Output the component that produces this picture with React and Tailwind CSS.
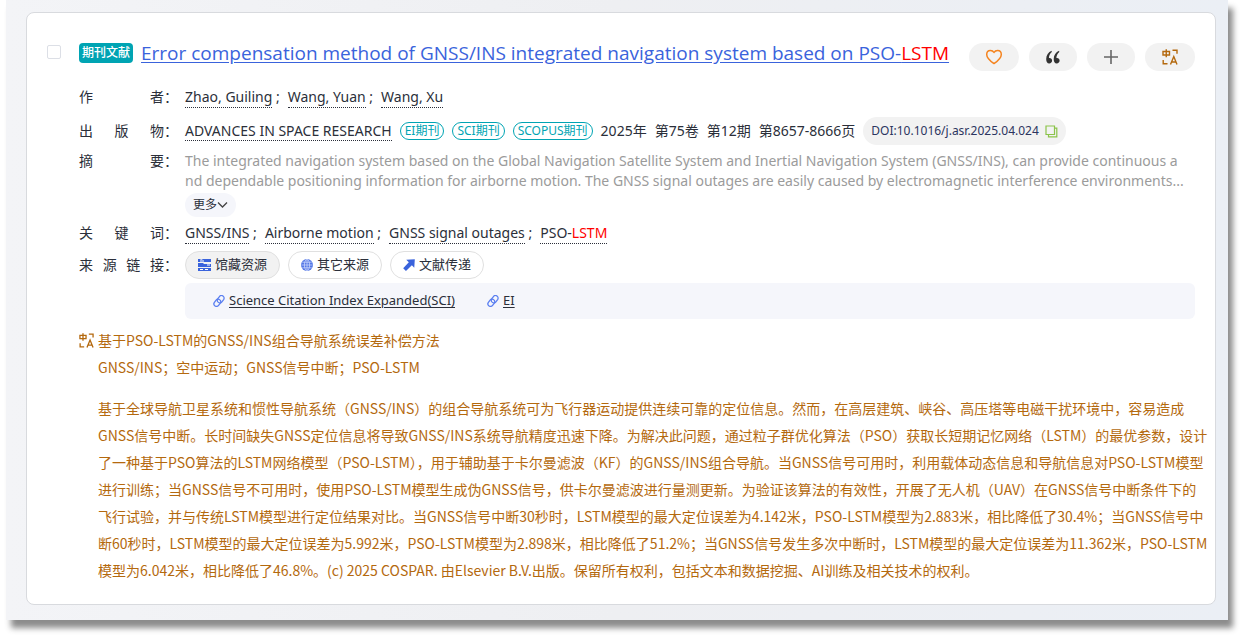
import React, { useState } from 'react';

const authors = ['Zhao, Guiling', 'Wang, Yuan', 'Wang, Xu'];
const indexes = ['EI期刊', 'SCI期刊', 'SCOPUS期刊'];
const issue = ['2025年', '第75卷', '第12期', '第8657-8666页'];
const keywords = ['GNSS/INS', 'Airborne motion', 'GNSS signal outages', 'PSO-LSTM'];

const abstractLines = [
  'The integrated navigation system based on the Global Navigation Satellite System and Inertial Navigation System (GNSS/INS), can provide continuous a',
  'nd dependable positioning information for airborne motion. The GNSS signal outages are easily caused by electromagnetic interference environments...',
];

const translation =
  '基于全球导航卫星系统和惯性导航系统（GNSS/INS）的组合导航系统可为飞行器运动提供连续可靠的定位信息。然而，在高层建筑、峡谷、高压塔等电磁干扰环境中，容易造成GNSS信号中断。长时间缺失GNSS定位信息将导致GNSS/INS系统导航精度迅速下降。为解决此问题，通过粒子群优化算法（PSO）获取长短期记忆网络（LSTM）的最优参数，设计了一种基于PSO算法的LSTM网络模型（PSO-LSTM），用于辅助基于卡尔曼滤波（KF）的GNSS/INS组合导航。当GNSS信号可用时，利用载体动态信息和导航信息对PSO-LSTM模型进行训练；当GNSS信号不可用时，使用PSO-LSTM模型生成伪GNSS信号，供卡尔曼滤波进行量测更新。为验证该算法的有效性，开展了无人机（UAV）在GNSS信号中断条件下的飞行试验，并与传统LSTM模型进行定位结果对比。当GNSS信号中断30秒时，LSTM模型的最大定位误差为4.142米，PSO-LSTM模型为2.883米，相比降低了30.4%；当GNSS信号中断60秒时，LSTM模型的最大定位误差为5.992米，PSO-LSTM模型为2.898米，相比降低了51.2%；当GNSS信号发生多次中断时，LSTM模型的最大定位误差为11.362米，PSO-LSTM模型为6.042米，相比降低了46.8%。(c) 2025 COSPAR. 由Elsevier B.V.出版。保留所有权利，包括文本和数据挖掘、AI训练及相关技术的权利。';

const HeartIcon = () => (
  <svg width="18" height="18" viewBox="0 0 18 18" fill="none" stroke="#f5841f" strokeWidth="1.5" strokeLinejoin="round">
    <path d="M9 15.6C5.2 12.9 1.7 10 1.7 6.4 1.7 4 3.4 2.4 5.4 2.4 7 2.4 8.3 3.2 9 4.5 9.7 3.2 11 2.4 12.6 2.4c2 0 3.7 1.6 3.7 4 0 3.6-3.5 6.5-7.3 9.2z" />
  </svg>
);

const QuoteIcon = () => (
  <svg width="14" height="14" viewBox="0 0 14 14" fill="#333">
    <path d="M5.6.8C2.4 2.2.2 5 .2 9c0 2.900 1.100 4.500 3 4.500 1.700 0 2.900-1.200 2.900-2.900S5 7.900 3.500 7.900c-.3 0-.4 0-.6.1C3 5.800 3.900 3.600 5.800 2.100z" />
    <path d="M13.100.8C9.900 2.200 7.700 5 7.700 9c0 2.900 1.100 4.500 3 4.500 1.700 0 2.900-1.200 2.900-2.900S12.500 7.900 11 7.900c-.3 0-.4 0-.6.1.1-2.200 1-4.400 2.900-5.900z" />
  </svg>
);

const PlusIcon = () => (
  <svg width="14" height="14" viewBox="0 0 14 14" fill="none" stroke="#666" strokeWidth="1.6">
    <path d="M7 0v14M0 7h14" />
  </svg>
);

const TranslateIcon = ({ size = 16 }) => (
  <svg className="shrink-0" width={size} height={size} viewBox="0 0 16 16" fill="none" stroke="#b4690e" strokeWidth="1.4">
    <path d="M1 2.500h6.500v3.500H1zM4.250.3v8" />
    <path d="M10.500 1.200H15V4.800M1.200 11v3.800H5.500" />
    <path d="M8.500 15.500 11.800 7.500l3.200 8M9.600 13h4.400" />
  </svg>
);

const CopyIcon = () => (
  <svg width="13" height="13" viewBox="0 0 13 13" fill="none" stroke="#8bc34a" strokeWidth="1.2">
    <path d="M1 1h8.500v8.500H1z" />
    <path d="M9.500 3.200h2.300v8.600H3.500V9.500" />
  </svg>
);

const ShelfIcon = () => (
  <svg width="13" height="12" viewBox="0 0 13 12">
    <path fill="#3a63dc" d="M0 0h2l1 1 2-1h8v3H0zM0 4h5l1 1h7v3H0zM0 9h13v3H0z" />
    <path stroke="#fff" strokeWidth="1" d="M2 2h4M9 6h3M2 10.500h3M7 10.500h3" />
  </svg>
);

const GlobeIcon = () => (
  <svg width="12" height="12" viewBox="0 0 13 13">
    <circle cx="6.500" cy="6.500" r="6.500" fill="#5578e6" />
    <g fill="none" stroke="#dbe4ff" strokeWidth=".7">
      <ellipse cx="6.500" cy="6.500" rx="2.800" ry="6" />
      <path d="M6.500.5v12M.5 6.500h12M1.400 3.500h10.200M1.400 9.500h10.200" />
    </g>
  </svg>
);

const ArrowIcon = () => (
  <svg width="12" height="12" viewBox="0 0 13 13" fill="#3a63dc">
    <path d="M3.500.8 12.800.2 12.200 9.500 9.600 6.900 3.200 13 .2 10 6.300 3.600z" />
  </svg>
);

const LinkIcon = () => (
  <svg width="12" height="12" viewBox="0 0 24 24" fill="none" stroke="#5b7ff0" strokeWidth="2.6" strokeLinecap="round">
    <g transform="rotate(-8 12 12)">
      <path d="M10 14a5 5 0 0 0 7.500.5l4-4a5 5 0 0 0-7.500-7l-4 4a5 5 0 0 0-1 5" />
      <path d="M14 10a5 5 0 0 0-7.500-.5l-4 4a5 5 0 0 0 7.500 7l4-4a5 5 0 0 0 1-5" />
    </g>
  </svg>
);

const sources = [
  { name: '馆藏资源', Icon: ShelfIcon },
  { name: '其它来源', Icon: GlobeIcon },
  { name: '文献传递', Icon: ArrowIcon },
];

const Marked = ({ text }) => {
  const [before, after] = text.split('LSTM');
  if (after === undefined) return text;
  return (
    <>
      {before}
      <span className="text-[#ff0000]">LSTM</span>
      {after}
    </>
  );
};

const Row = ({ label, className, children }) => (
  <div className={`flex gap-[7px] ${className}`}>
    <div className="flex shrink-0 text-sm leading-5">
      <span className="w-[85px] [text-align-last:justify]">{label}</span>
      <span>：</span>
    </div>
    <div className="min-w-0 flex-1">{children}</div>
  </div>
);

const TermList = ({ items }) => (
  <div className="flex flex-wrap gap-x-2 text-sm leading-5">
    {items.map((item, i) => (
      <span key={item}>
        <a href="#" className="inline-block border-b border-dotted border-[#2b2f3a]">
          <Marked text={item} />
        </a>
        {i < items.length - 1 && ' ;'}
      </span>
    ))}
  </div>
);

export default function App() {
  const [checked, setChecked] = useState(false);
  const [source, setSource] = useState('馆藏资源');

  return (
    <div className="bg-white pr-3.5 pb-[22px] pl-1.5 font-['Noto_Sans','Noto_Sans_CJK_SC',sans-serif] text-[#2b2f3a]">
      <div className="bg-linear-to-r from-[#f3f4f7] via-[#eeeff2] to-[#ebeff5] pt-3 pr-3 pb-[15px] pl-5 shadow-[5px_8px_6px_#8c8c8c]">
        <article className="flex gap-[18px] rounded-lg border border-[#d8dade] bg-white px-5 pt-[30px] pb-5">
          <input
            type="checkbox"
            aria-label="选择文献"
            checked={checked}
            onChange={() => setChecked(!checked)}
            className="mt-0.5 size-3.5 shrink-0 appearance-none rounded-xs border border-[#dcdfe6] bg-white checked:bg-[#3a63dc]"
          />
          <div className="min-w-0 flex-1">
            <header className="flex items-start justify-between">
              <div className="flex items-start gap-2">
                <span className="h-5 shrink-0 rounded-sm bg-[#00a4b3] px-[3px] text-xs leading-5 font-medium text-white">期刊文献</span>
                <h1 className="-mt-1 font-['Open_Sans',sans-serif] text-[19px] leading-7">
                  <a href="#" className="text-[#3a63dc] underline underline-offset-2">
                    <Marked text="Error compensation method of GNSS/INS integrated navigation system based on PSO-LSTM" />
                  </a>
                </h1>
              </div>
              <div className="flex shrink-0 gap-2.5">
                <button aria-label="收藏" className="flex h-7 w-[50px] items-center justify-center rounded-full bg-[#f2f2f2]"><HeartIcon /></button>
                <button aria-label="引用" className="flex h-7 w-12 items-center justify-center rounded-full bg-[#f2f2f2]"><QuoteIcon /></button>
                <button aria-label="添加" className="flex h-7 w-12 items-center justify-center rounded-full bg-[#f2f2f2]"><PlusIcon /></button>
                <button aria-label="翻译" className="flex h-7 w-[50px] items-center justify-center rounded-full bg-[#f2f2f2]"><TranslateIcon /></button>
              </div>
            </header>

            <Row label="作者" className="mt-4">
              <TermList items={authors} />
            </Row>

            <Row label="出版物" className="mt-[9px] items-center">
              <div className="flex items-center gap-2 text-sm leading-[18px]">
                <a href="#" className="border-b border-dotted border-[#2b2f3a]">ADVANCES IN SPACE RESEARCH</a>
                {indexes.map((name) => (
                  <span key={name} className="rounded-full border border-[#00a4b3] px-1 text-xs leading-4 text-[#00a4b3]">{name}</span>
                ))}
                {issue.map((part) => (
                  <span key={part}>{part}</span>
                ))}
                <button className="flex h-7 items-center gap-1.5 rounded-full bg-[#f2f2f2] px-2 text-xs text-[#2c3560]">
                  DOI:10.1016/j.asr.2025.04.024
                  <CopyIcon />
                </button>
              </div>
            </Row>

            <Row label="摘要" className="mt-1.5">
              <p className="text-sm leading-5 text-[#9b9b9b]">
                {abstractLines.map((line) => (
                  <span key={line} className="block whitespace-nowrap">{line}</span>
                ))}
              </p>
              <button className="mt-0.5 flex h-6 items-center rounded-full bg-[#f5f6fb] px-2 text-xs">
                更多
                <svg width="11" height="8" viewBox="0 0 11 8" fill="none" stroke="#444" strokeWidth="1.3">
                  <path d="M1 1.500 5.500 6 10 1.500" />
                </svg>
              </button>
            </Row>

            <Row label="关键词" className="mt-1.5">
              <TermList items={keywords} />
            </Row>

            <Row label="来源链接" className="mt-[11px]">
              <div className="-mt-1 flex gap-2">
                {sources.map(({ name, Icon }) => (
                  <button
                    key={name}
                    onClick={() => setSource(name)}
                    className={`flex h-7 items-center gap-1 rounded-full border border-[#e0e0e0] px-3 text-[13px] ${source === name ? 'bg-[#f2f2f2]' : 'bg-white'}`}
                  >
                    <Icon />
                    {name}
                  </button>
                ))}
              </div>
              <div className="mt-1 flex h-9 items-center gap-8 rounded-md bg-[#f5f6fb] px-7 text-[13px]">
                <a href="#" className="flex items-center gap-1">
                  <LinkIcon />
                  <span className="underline underline-offset-2">Science Citation Index Expanded(SCI)</span>
                </a>
                <a href="#" className="flex items-center gap-1">
                  <LinkIcon />
                  <span className="underline underline-offset-2">EI</span>
                </a>
              </div>
            </Row>

            <section className="mt-2 -mr-3.5 flex items-start gap-1 font-['Noto_Sans_CJK_SC',sans-serif] text-sm leading-[27px] text-[#b4690e]">
              <div className="mt-1.5">
                <TranslateIcon size={15} />
              </div>
              <div className="min-w-0 flex-1">
                <h2>基于PSO-LSTM的GNSS/INS组合导航系统误差补偿方法</h2>
                <p>GNSS/INS；空中运动；GNSS信号中断；PSO-LSTM</p>
                <p className="mt-3.5">{translation}</p>
              </div>
            </section>
          </div>
        </article>
      </div>
    </div>
  );
}
